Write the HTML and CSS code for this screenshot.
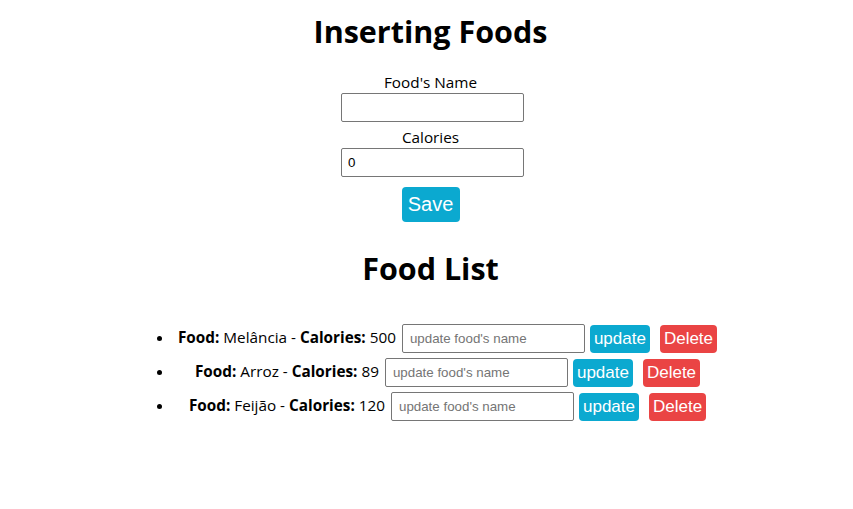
FILE: index.html
```html
<!DOCTYPE html>
<html>
<head>
<meta charset="utf-8">
<link rel="stylesheet" href="styles.css">
</head>
<body>
<div class="app">
  <h1 class="title">Inserting Foods</h1>
  <div class="form">
    <label class="label">Food's Name</label>
    <input class="field" type="text">
    <label class="label label-cal">Calories</label>
    <input class="field" type="number" value="0">
    <button class="btn btn-save">Save</button>
  </div>
  <h1 class="title title-list">Food List</h1>
  <ul class="list">
    <li class="item"><b>Food:</b> Melância - <b>Calories:</b> 500 <input class="edit" type="text" placeholder="update food's name"><button class="btn btn-update">update</button><button class="btn btn-delete">Delete</button></li>
    <li class="item"><b>Food:</b> Arroz - <b>Calories:</b> 89 <input class="edit" type="text" placeholder="update food's name"><button class="btn btn-update">update</button><button class="btn btn-delete">Delete</button></li>
    <li class="item"><b>Food:</b> Feijão - <b>Calories:</b> 120 <input class="edit" type="text" placeholder="update food's name"><button class="btn btn-update">update</button><button class="btn btn-delete">Delete</button></li>
  </ul>
</div>
</body>
</html>
```
FILE: styles.css
```css
html, body {
  margin: 0;
  padding: 0;
  background: #fff;
}
.app {
  font-family: "Open Sans", "Noto Sans", sans-serif;
  font-size: 15.3px;
  color: #000;
  text-align: center;
  padding-top: 10px;
}
.title {
  margin: 0;
  padding-left: 8px;
  font-size: 30.5px;
  line-height: 42px;
  font-weight: 700;
}
.form {
  display: flex;
  flex-direction: column;
  align-items: center;
  padding-top: 20px;
  padding-left: 8px;
}
.label {
  line-height: 21px;
  display: block;
}
.label-cal {
  margin-top: 5px;
}
.field {
  box-sizing: border-box;
  width: 183px;
  height: 29px;
  margin: 0 0 0 4px;
  border: 1px solid #767676;
  border-radius: 2px;
  padding: 1px 6px;
  font-family: "Liberation Sans", Arial, sans-serif;
  font-size: 13.33px;
  color: #000;
}
.btn {
  border: none;
  border-radius: 4px;
  color: #fff;
  font-family: "Liberation Sans", Arial, sans-serif;
  cursor: pointer;
  margin: 0;
}
.btn-save {
  margin-top: 10px;
  height: 35px;
  width: 58px;
  padding: 0;
  font-size: 20px;
  background: #0ba9d0;
}
.title-list {
  margin-top: 25px;
}
.list {
  width: 545px;
  margin: 31px auto 0;
  padding: 0 0 0 40px;
}
.item {
  height: 34px;
  line-height: 34px;
  white-space: nowrap;
  padding-left: 2px;
}
.edit {
  box-sizing: border-box;
  width: 183px;
  height: 29px;
  margin: 0 5px 0 2px;
  border: 1px solid #767676;
  border-radius: 2px;
  padding: 1px 7px;
  font-family: "Liberation Sans", Arial, sans-serif;
  font-size: 13.33px;
  vertical-align: middle;
}
.edit::placeholder {
  color: #757575;
}
.btn-update,
.btn-delete {
  height: 28px;
  font-size: 17px;
  vertical-align: middle;
}
.btn-update {
  background: #0ba9d0;
  margin-right: 10px;
  padding: 0 4px;
}
.btn-delete {
  background: #ea4444;
  padding: 0 4px;
}
```
